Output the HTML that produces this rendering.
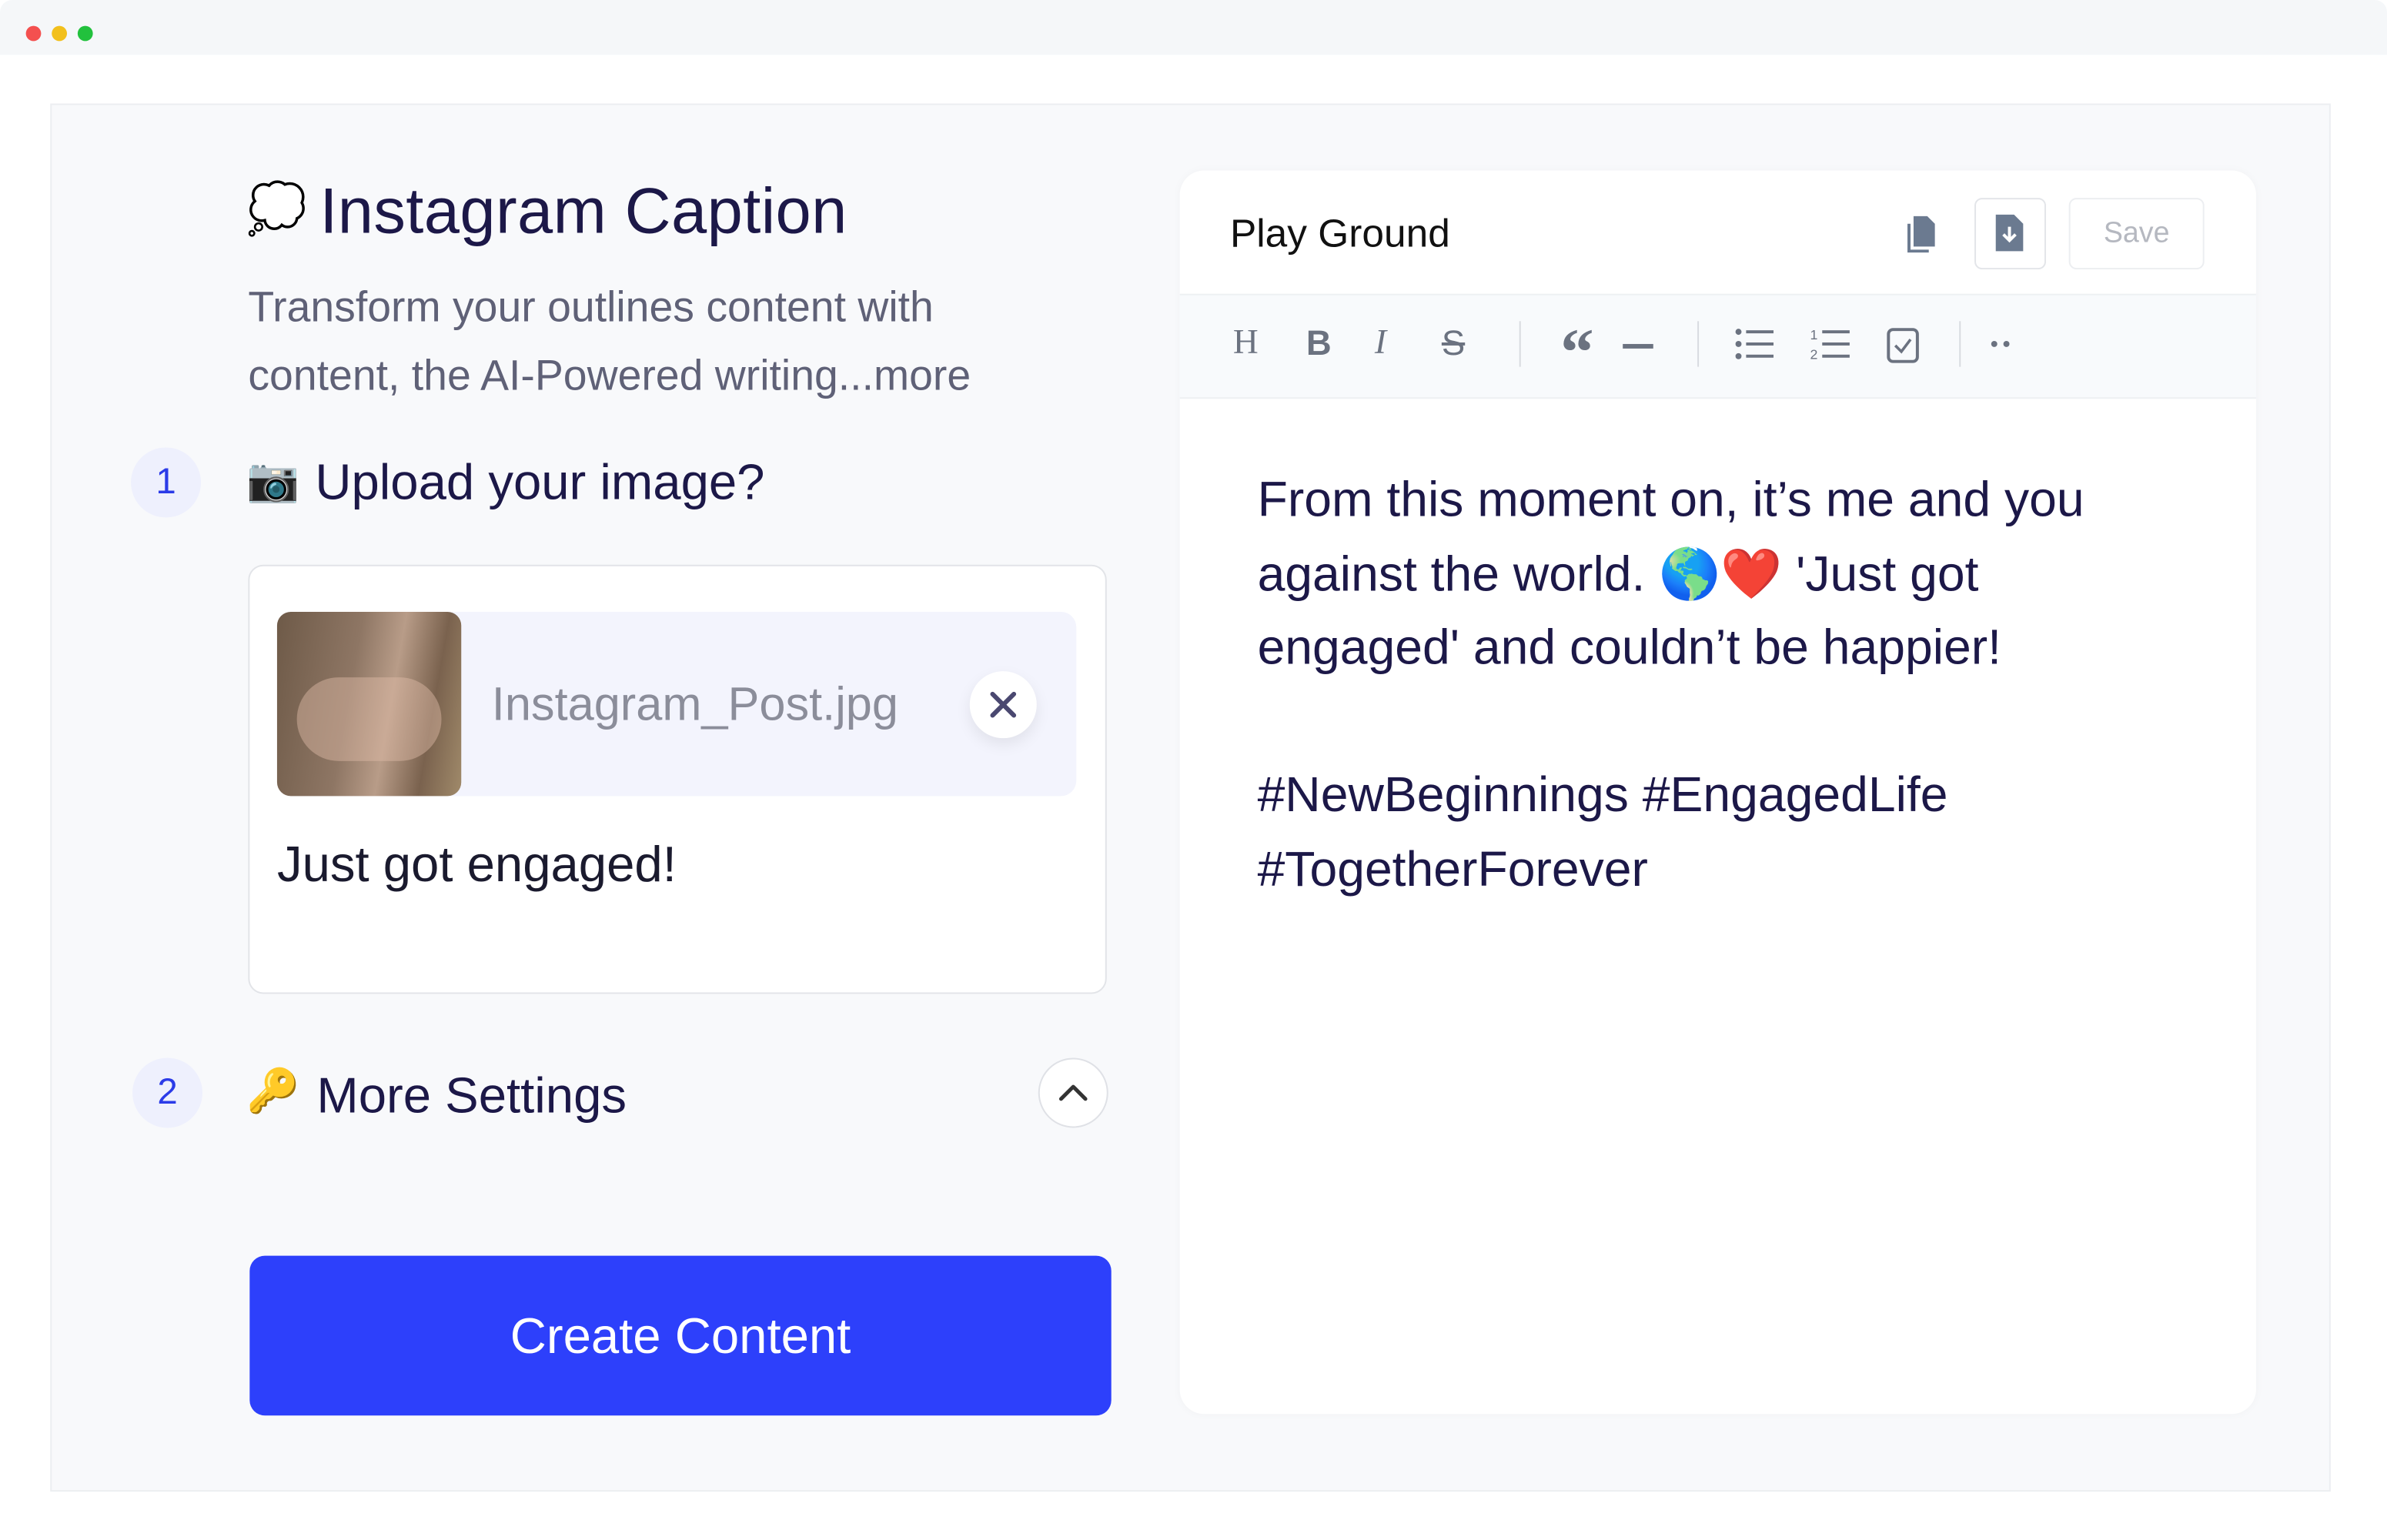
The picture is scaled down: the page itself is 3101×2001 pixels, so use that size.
<!DOCTYPE html>
<html><head><meta charset="utf-8"><style>
html,body{margin:0;padding:0;width:3101px;height:2000px;overflow:hidden;background:#fff}
#s{position:absolute;left:0;top:0;width:1568px;height:1012px;transform:scale(1.97768);transform-origin:0 0;font-family:"Liberation Sans","Noto Sans CJK SC",sans-serif}
.a{position:absolute}
.dot{position:absolute;width:10px;height:10px;border-radius:50%;top:17px}
.t{white-space:nowrap}
</style></head><body><div id="s">
<div class="a" style="left:0;top:0;width:1568px;height:36px;background:#f5f7f9;border-radius:8px 8px 0 0"></div>
<div class="dot" style="left:17px;background:#f4504f"></div>
<div class="dot" style="left:34px;background:#f2c01c"></div>
<div class="dot" style="left:51px;background:#22c13d"></div>
<div class="a" style="left:33px;top:68px;width:1496px;height:910px;background:#f8f9fb;border:1px solid #eceef1"></div>

<div class="a t" style="left:162px;top:118px;font-size:32px">💭</div>
<div class="a t" style="left:210px;top:115px;font-size:42px;color:#1c1848;letter-spacing:0.2px">Instagram Caption</div>
<div class="a" style="left:163px;top:179px;font-size:28px;color:#5f6177;line-height:45px;width:520px">Transform your outlines content with content, the AI-Powered writing...more</div>

<div class="a" style="left:86px;top:294px;width:46px;height:46px;border-radius:50%;background:#eef0fd;color:#2b3be8;font-size:24px;text-align:center;line-height:46px">1</div>
<div class="a t" style="left:162px;top:299px;font-size:28px">📷</div>
<div class="a t" style="left:207px;top:298px;font-size:33px;color:#1c1848">Upload your image?</div>

<div class="a" style="left:163px;top:371px;width:562px;height:280px;background:#fff;border:1px solid #e2e4e8;border-radius:10px"></div>
<div class="a" style="left:182px;top:402px;width:525px;height:121px;background:#f3f4fd;border-radius:10px"></div>
<div class="a" style="left:182px;top:402px;width:121px;height:121px;border-radius:9px;background:linear-gradient(100deg,#6e5a48 0%,#8e7664 40%,#b89c88 60%,#7a624e 80%,#a08a6a 100%)"></div>
<div class="a" style="left:195px;top:445px;width:95px;height:55px;border-radius:30px;background:#e0bca8;opacity:.45"></div>
<div class="a t" style="left:323px;top:445px;font-size:31px;color:#8b8d9a">Instagram_Post.jpg</div>
<div class="a" style="left:637px;top:441px;width:44px;height:44px;border-radius:50%;background:#fff;box-shadow:0 4px 10px rgba(0,0,0,.08)"></div>
<svg class="a" style="left:649px;top:453px" width="20" height="20" viewBox="0 0 20 20"><path d="M3 3L17 17M17 3L3 17" stroke="#4a4870" stroke-width="3" stroke-linecap="round"/></svg>
<div class="a t" style="left:182px;top:549px;font-size:33px;color:#1a1a2e">Just got engaged!</div>

<div class="a" style="left:87px;top:695px;width:46px;height:46px;border-radius:50%;background:#eef0fd;color:#2b3be8;font-size:24px;text-align:center;line-height:46px">2</div>
<div class="a t" style="left:162px;top:700px;font-size:28px">🔑</div>
<div class="a t" style="left:208px;top:701px;font-size:33px;color:#1c1848">More Settings</div>
<div class="a" style="left:682px;top:695px;width:44px;height:44px;border-radius:50%;background:#fff;border:1px solid #dfe1e6"></div>
<svg class="a" style="left:694px;top:708px" width="22" height="20" viewBox="0 0 22 20"><path d="M3 14L11 6L19 14" fill="none" stroke="#333" stroke-width="2.5" stroke-linecap="round" stroke-linejoin="round"/></svg>

<div class="a" style="left:164px;top:825px;width:566px;height:105px;background:#2d40fb;border-radius:10px;color:#fff;font-size:33px;text-align:center;line-height:105px">Create Content</div>

<div class="a" style="left:775px;top:112px;width:707px;height:817px;background:#fff;border-radius:16px;box-shadow:0 0 6px rgba(0,0,0,.03)"></div>
<div class="a t" style="left:808px;top:138px;font-size:26px;color:#111">Play Ground</div>
<svg class="a" style="left:1251px;top:140px" width="22" height="26" viewBox="0 0 22 26"><path d="M6 2h9l5 5v15H6z" fill="#6b7a90"/><path d="M2 7h2v17h12v2H2z" fill="#6b7a90"/></svg>
<div class="a" style="left:1297px;top:130px;width:45px;height:45px;border:1px solid #e3e5e9;border-radius:5px"></div>
<svg class="a" style="left:1309px;top:140px" width="22" height="26" viewBox="0 0 22 26"><path d="M2 1h12l6 6v18H2z" fill="#6b7a90"/><path d="M11 9v9M7 14l4 4 4-4" stroke="#fff" stroke-width="2" fill="none"/></svg>
<div class="a" style="left:1359px;top:130px;width:87px;height:45px;border:1px solid #eceef1;border-radius:5px;color:#b5b8c0;font-size:19px;text-align:center;line-height:45px">Save</div>
<div class="a" style="left:775px;top:193px;width:707px;height:67px;background:#f8fafc;border-top:1px solid #eef0f3;border-bottom:1px solid #eef0f3"></div>
<div class="a t" style="left:810px;top:212px;font-size:23px;color:#6b7280;font-family:'Liberation Serif',serif">H</div>
<div class="a t" style="left:858px;top:212px;font-size:23px;color:#6b7280;font-weight:bold">B</div>
<div class="a t" style="left:903px;top:212px;font-size:23px;color:#6b7280;font-style:italic;font-family:'Liberation Serif',serif">I</div>
<div class="a t" style="left:947px;top:212px;font-size:23px;color:#6b7280;text-decoration:line-through">S</div>
<div class="a" style="left:998px;top:211px;width:1px;height:30px;background:#d8dbe0"></div>
<div class="a t" style="left:1025px;top:210px;font-size:44px;line-height:44px;color:#6b7280;font-weight:bold;font-family:'Liberation Serif',serif">“</div>
<div class="a" style="left:1066px;top:226px;width:20px;height:3px;background:#6b7280"></div>
<div class="a" style="left:1115px;top:211px;width:1px;height:30px;background:#d8dbe0"></div>
<svg class="a" style="left:1140px;top:215px" width="26" height="22" viewBox="0 0 26 22"><g fill="#6b7280"><circle cx="2" cy="3" r="2"/><circle cx="2" cy="11" r="2"/><circle cx="2" cy="19" r="2"/><rect x="7" y="2" width="18" height="2"/><rect x="7" y="10" width="18" height="2"/><rect x="7" y="18" width="18" height="2"/></g></svg>
<svg class="a" style="left:1188px;top:214px" width="28" height="24" viewBox="0 0 28 24"><g fill="#6b7280"><rect x="9" y="3" width="18" height="2"/><rect x="9" y="11" width="18" height="2"/><rect x="9" y="19" width="18" height="2"/></g><text x="1" y="9" font-size="9" fill="#6b7280">1</text><text x="1" y="22" font-size="9" fill="#6b7280">2</text></svg>
<svg class="a" style="left:1239px;top:215px" width="22" height="24" viewBox="0 0 22 24"><rect x="1.5" y="1.5" width="19" height="21" rx="3" fill="none" stroke="#6b7280" stroke-width="2"/><path d="M6 12l4 4 6-8" fill="none" stroke="#6b7280" stroke-width="1.8"/></svg>
<div class="a" style="left:1287px;top:211px;width:1px;height:30px;background:#d8dbe0"></div>
<div class="a" style="left:1308px;top:224px;width:4px;height:4px;border-radius:50%;background:#6b7280"></div>
<div class="a" style="left:1316px;top:224px;width:4px;height:4px;border-radius:50%;background:#6b7280"></div>

<div class="a" style="left:826px;top:304px;width:600px;font-size:32.5px;line-height:48.5px;color:#1c1848">From this moment on, it’s me and you against the world. 🌎❤️ 'Just got engaged' and couldn’t be happier!<br><br>#NewBeginnings #EngagedLife #TogetherForever</div>
</div></body></html>
